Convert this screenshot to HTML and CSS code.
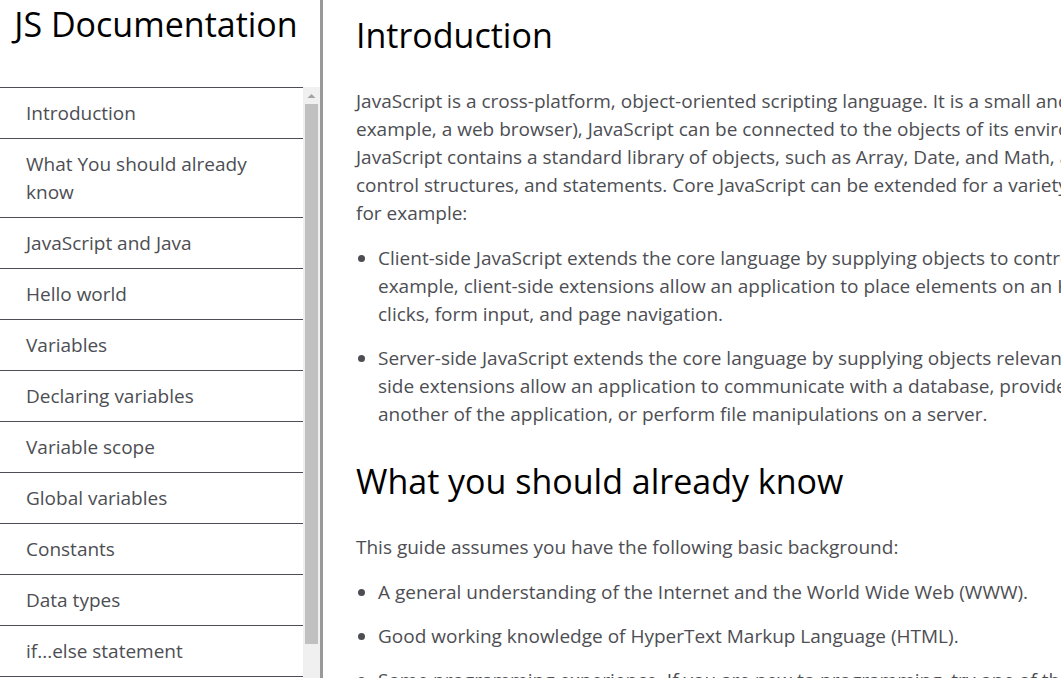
FILE: index.html
```html
<!DOCTYPE html>
<html lang="en">
<head>
<meta charset="utf-8">
<title>JS Documentation</title>
<link rel="stylesheet" href="styles.css">
</head>
<body>
<div class="page">
  <nav class="navbar">
    <h1 class="brand">JS Documentation</h1>
    <div class="nav-scroll">
      <ul class="nav-list">
        <li><a class="nav-link" href="#introduction">Introduction</a></li>
        <li><a class="nav-link" href="#already-know">What You should already know</a></li>
        <li><a class="nav-link" href="#js-and-java">JavaScript and Java</a></li>
        <li><a class="nav-link" href="#hello-world">Hello world</a></li>
        <li><a class="nav-link" href="#variables">Variables</a></li>
        <li><a class="nav-link" href="#declaring">Declaring variables</a></li>
        <li><a class="nav-link" href="#scope">Variable scope</a></li>
        <li><a class="nav-link" href="#globals">Global variables</a></li>
        <li><a class="nav-link" href="#constants">Constants</a></li>
        <li><a class="nav-link" href="#data-types">Data types</a></li>
        <li><a class="nav-link" href="#if-else">if...else statement</a></li>
      </ul>
      <div class="scrollbar" aria-hidden="true">
        <svg class="scroll-arrow" width="17" height="17" viewBox="0 0 17 17"><path d="M4.5 11 8.5 7 12.500 11Z" fill="#a3a3a3"/></svg>
        <div class="scroll-track"><div class="scroll-thumb"></div></div>
      </div>
    </div>
  </nav>
  <main class="content">
    <section id="introduction">
      <h2 class="title">Introduction</h2>
      <p class="text">JavaScript is a cross-platform, object-oriented scripting language. It is a small and<br>example, a web browser), JavaScript can be connected to the objects of its environment<br>JavaScript contains a standard library of objects, such as Array, Date, and Math, and<br>control structures, and statements. Core JavaScript can be extended for a variety<br>for example:</p>
      <ul class="points">
        <li>Client-side JavaScript extends the core language by supplying objects to control<br>example, client-side extensions allow an application to place elements on an HTML<br>clicks, form input, and page navigation.</li>
        <li>Server-side JavaScript extends the core language by supplying objects relevant<br>side extensions allow an application to communicate with a database, provide<br>another of the application, or perform file manipulations on a server.</li>
      </ul>
    </section>
    <section id="already-know">
      <h2 class="title">What you should already know</h2>
      <p class="text">This guide assumes you have the following basic background:</p>
      <ul class="points">
        <li>A general understanding of the Internet and the World Wide Web (WWW).</li>
        <li>Good working knowledge of HyperText Markup Language (HTML).</li>
        <li>Some programming experience. If you are new to programming, try one of the</li>
      </ul>
    </section>
  </main>
</div>
</body>
</html>
```
FILE: styles.css
```css
* { box-sizing: border-box; }
body {
  margin: 0;
  background: #fff;
  color: #4d4e53;
  font-family: "Open Sans", Arial, sans-serif;
  font-size: 19px;
  line-height: 28px;
}
.page {
  display: flex;
  height: 100vh;
  overflow: hidden;
}
.navbar {
  display: flex;
  flex-direction: column;
  flex: none;
  width: 323px;
  border-right: 3px solid #999;
}
.brand {
  margin: 0 0 39px;
  padding-right: 8px;
  color: #000;
  font-size: 34px;
  font-weight: 400;
  line-height: 48px;
  text-align: center;
  white-space: nowrap;
}
.nav-scroll {
  display: flex;
  flex: 1;
  min-height: 0;
  overflow: hidden;
}
.nav-list {
  flex: 1;
  margin: 0;
  padding: 0;
  list-style: none;
}
.nav-link {
  display: block;
  padding: 11px 26px;
  border-top: 1px solid #4d4e53;
  color: #4d4e53;
  text-decoration: none;
}
.nav-list li:last-child .nav-link { border-bottom: 1px solid #4d4e53; }
.scrollbar {
  display: flex;
  flex-direction: column;
  width: 17px;
  background: #f0f0f0;
}
.scroll-arrow { display: block; flex: none; }
.scroll-track {
  flex: 1;
  padding: 0 2px;
}
.scroll-thumb {
  height: 94%;
  background: #c0c0c0;
}
.content {
  flex: 1;
  min-width: 0;
  padding-left: 33px;
  overflow: hidden;
  white-space: nowrap;
}
.title {
  margin: 0 0 26px;
  padding-top: 10px;
  color: #000;
  font-size: 34px;
  font-weight: 400;
  line-height: 51px;
}
.text { margin: 0 0 17px; }
.points {
  margin: 0 0 18px;
  padding-left: 22px;
}
.points li { margin-bottom: 16px; }
```
